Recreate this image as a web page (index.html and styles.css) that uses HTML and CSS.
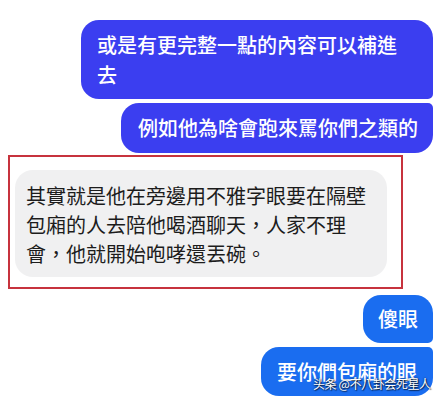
FILE: index.html
```html
<!DOCTYPE html>
<html lang="zh-Hant">
<head>
    <meta charset="UTF-8" />
    <meta name="viewport" content="width=device-width, initial-scale=1.0" />
    <title>對話</title>
    <link rel="stylesheet" href="styles.css">
</head>
<body>
<div class="chat">
    <div class="bubble out purple first">或是有更完整一點的內容可以補進去</div>
    <div class="bubble out purple last">例如他為啥會跑來罵你們之類的</div>

    <!-- 標記框 -->
    <div class="marca">
        <div class="bubble in">其實就是他在旁邊用不雅字眼要在隔壁包廂的人去陪他喝酒聊天，人家不理會，他就開始咆哮還丟碗。</div>
    </div>

    <div class="bubble out blue first corto">傻眼</div>
    <div class="bubble out blue last largo">要你們包廂的眼</div>
</div>

<div class="watermark">头条 @不八卦会死星人</div>
</body>
</html>
```

FILE: styles.css
```css
body {
    margin: 0;
    background-color: #fff;
    font-family: "Noto Sans CJK TC", "Noto Sans CJK SC", sans-serif;
    position: relative;
    height: 401px;
    overflow: hidden;
}

.chat {
    display: flex;
    flex-direction: column;
    align-items: flex-end;
    padding: 20px 6px 0 8px;
}

.bubble {
    font-size: 20px;
    line-height: 30px;
    box-sizing: border-box;
    border-radius: 18px;
    color: #fff;
}

.out {
    font-weight: 500;
}

.out.first {
    border-bottom-right-radius: 5px;
}

.out.last {
    border-top-right-radius: 5px;
    margin-top: 4px;
}

.purple {
    background-color: #3b3ef0;
}

.purple.first {
    width: 352px;
    padding: 10px 19px 9px 16px;
}

.purple.last {
    padding: 10px 15px 10px 17px;
}

.marca {
    align-self: flex-start;
    margin-top: 2px;
    width: 395px;
    box-sizing: border-box;
    border: 2px solid #c7333d;
    padding: 13px 0 10px 5px;
}

.bubble.in {
    width: 372px;
    background-color: #f0f0f1;
    color: #1c1c1c;
    line-height: 29px;
    padding: 11px 20px 9px 11px;
}

.blue {
    background-color: #1a6df0;
}

.corto {
    margin-top: 6px;
    padding: 9px 15px;
}

.largo {
    margin-top: 5px;
    padding: 10px 16px 9px 16px;
}

/* marca de agua */
.watermark {
    position: absolute;
    left: 313px;
    top: 375px;
    white-space: nowrap;
    font-family: "Noto Sans CJK SC", sans-serif;
    font-size: 12px;
    letter-spacing: -0.4px;
    color: #fff;
    text-shadow: 0 0 2px rgba(0, 0, 0, 0.8), 1px 1px 1px rgba(0, 0, 0, 0.6);
}
```
